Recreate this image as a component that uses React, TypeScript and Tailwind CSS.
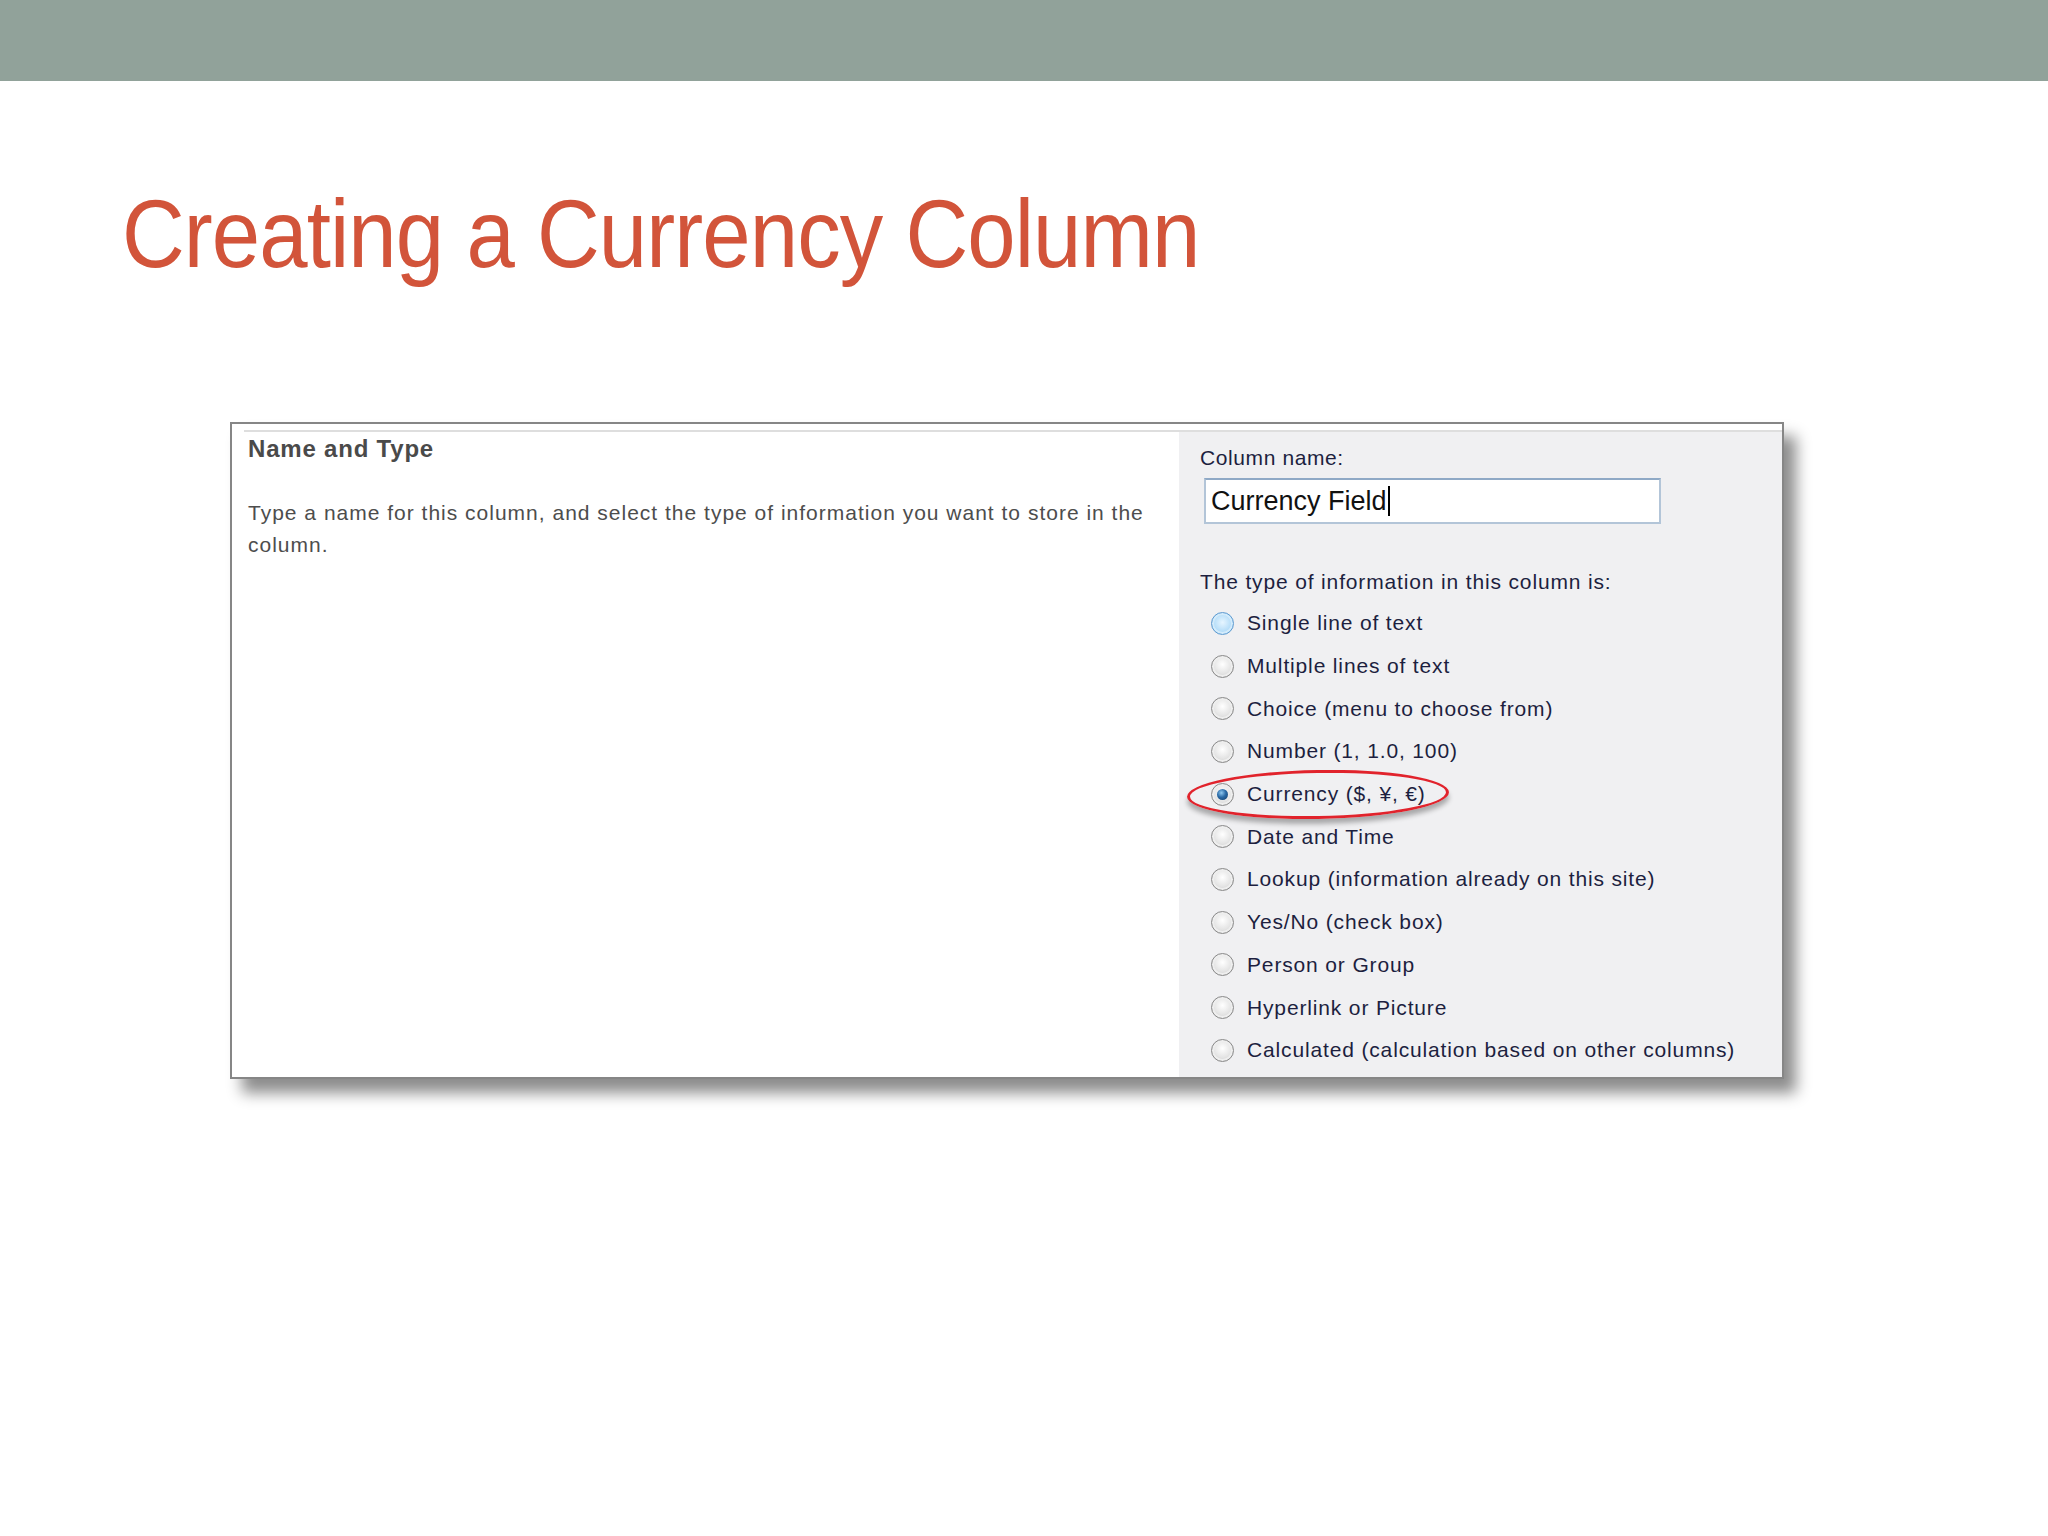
const options = [
  'Single line of text',
  'Multiple lines of text',
  'Choice (menu to choose from)',
  'Number (1, 1.0, 100)',
  'Currency ($, ¥, €)',
  'Date and Time',
  'Lookup (information already on this site)',
  'Yes/No (check box)',
  'Person or Group',
  'Hyperlink or Picture',
  'Calculated (calculation based on other columns)',
];

const Radio = ({ state }: { state: 'hover' | 'checked' | 'idle' }) => {
  if (state === 'hover') {
    return (
      <span className="block h-[23px] w-[23px] rounded-full border border-[#5f9bd0] bg-[radial-gradient(circle_at_50%_45%,#e6f5ff_0%,#b3dcf8_60%,#84bfea_100%)] shadow-[inset_0_0_0_2px_#d3ebfb]" />
    );
  }
  return (
    <span className="flex h-[23px] w-[23px] items-center justify-center rounded-full border border-[#8a8a8a] bg-[radial-gradient(circle_at_50%_40%,#ffffff_0%,#e4e4e4_55%,#bdbdbd_100%)] shadow-[inset_0_0_0_2px_#eeeeee]">
      {state === 'checked' && (
        <span className="block h-[11px] w-[11px] rounded-full bg-[radial-gradient(circle_at_40%_35%,#8fc8f0_0%,#2a6aa6_45%,#123a66_100%)]" />
      )}
    </span>
  );
};

export default function App() {
  return (
    <div className="min-h-screen w-[2048px] bg-white font-['Liberation_Sans',Arial,sans-serif]">
      <div className="h-[81px] bg-[#91a29a]" />

      <h1 className="ml-[122px] mt-[105px] origin-left scale-x-[0.905] text-[96px] leading-[1] tracking-[-1px] whitespace-nowrap text-[#d2543a]">
        Creating a Currency Column
      </h1>

      <div className="ml-[230px] mt-[140px] w-[1554px] border-2 border-[#868686] bg-white pl-[12px] pt-[6px] shadow-[12px_14px_14px_rgba(0,0,0,0.45)]">
        <div className="flex border-t-2 border-[#dedede]">
          <div className="flex-1 pl-[4px] pt-[2px]">
            <div className="text-[24px] leading-[30px] font-bold tracking-[0.8px] text-[#4a4a4a]">
              Name and Type
            </div>
            <p className="mt-[33px] w-[920px] text-[21px] leading-[32px] tracking-[1px] text-[#4d4d4d]">
              Type a name for this column, and select the type of information
              you want to store in the column.
            </p>
          </div>

          <div className="w-[603px] bg-[#f0f0f2] pb-[5px] pl-[21px] pt-[12px] text-[21px] leading-[28px] tracking-[0.85px] text-[#1d1f3f]">
            <div className="tracking-[0.6px]">Column name:</div>
            <div className="ml-[4px] mt-[6px] flex h-[46px] w-[457px] items-center border-2 border-[#b3c5d8] border-t-[#8fa9c6] bg-white pl-[5px] text-[27px] tracking-normal text-[#111]">
              Currency Field
              <span className="ml-[1px] inline-block h-[30px] w-[2px] bg-black" />
            </div>

            <div className="mt-[44px]">The type of information in this column is:</div>

            <div className="mt-[6px]">
              {options.map((label, i) => (
                <div key={label} className="relative flex h-[42.7px] items-center">
                  <span className="ml-[11px] mr-[13px]">
                    <Radio state={i === 0 ? 'hover' : i === 4 ? 'checked' : 'idle'} />
                  </span>
                  <span>{label}</span>
                  {i === 4 && (
                    <span className="absolute left-[-13px] top-[-3px] h-[49px] w-[262px] -rotate-[1deg] rounded-[50%] border-[3px] border-[#e1232c] shadow-[0_5px_5px_rgba(0,0,0,0.3)]" />
                  )}
                </div>
              ))}
            </div>
          </div>
        </div>
      </div>
    </div>
  );
}
